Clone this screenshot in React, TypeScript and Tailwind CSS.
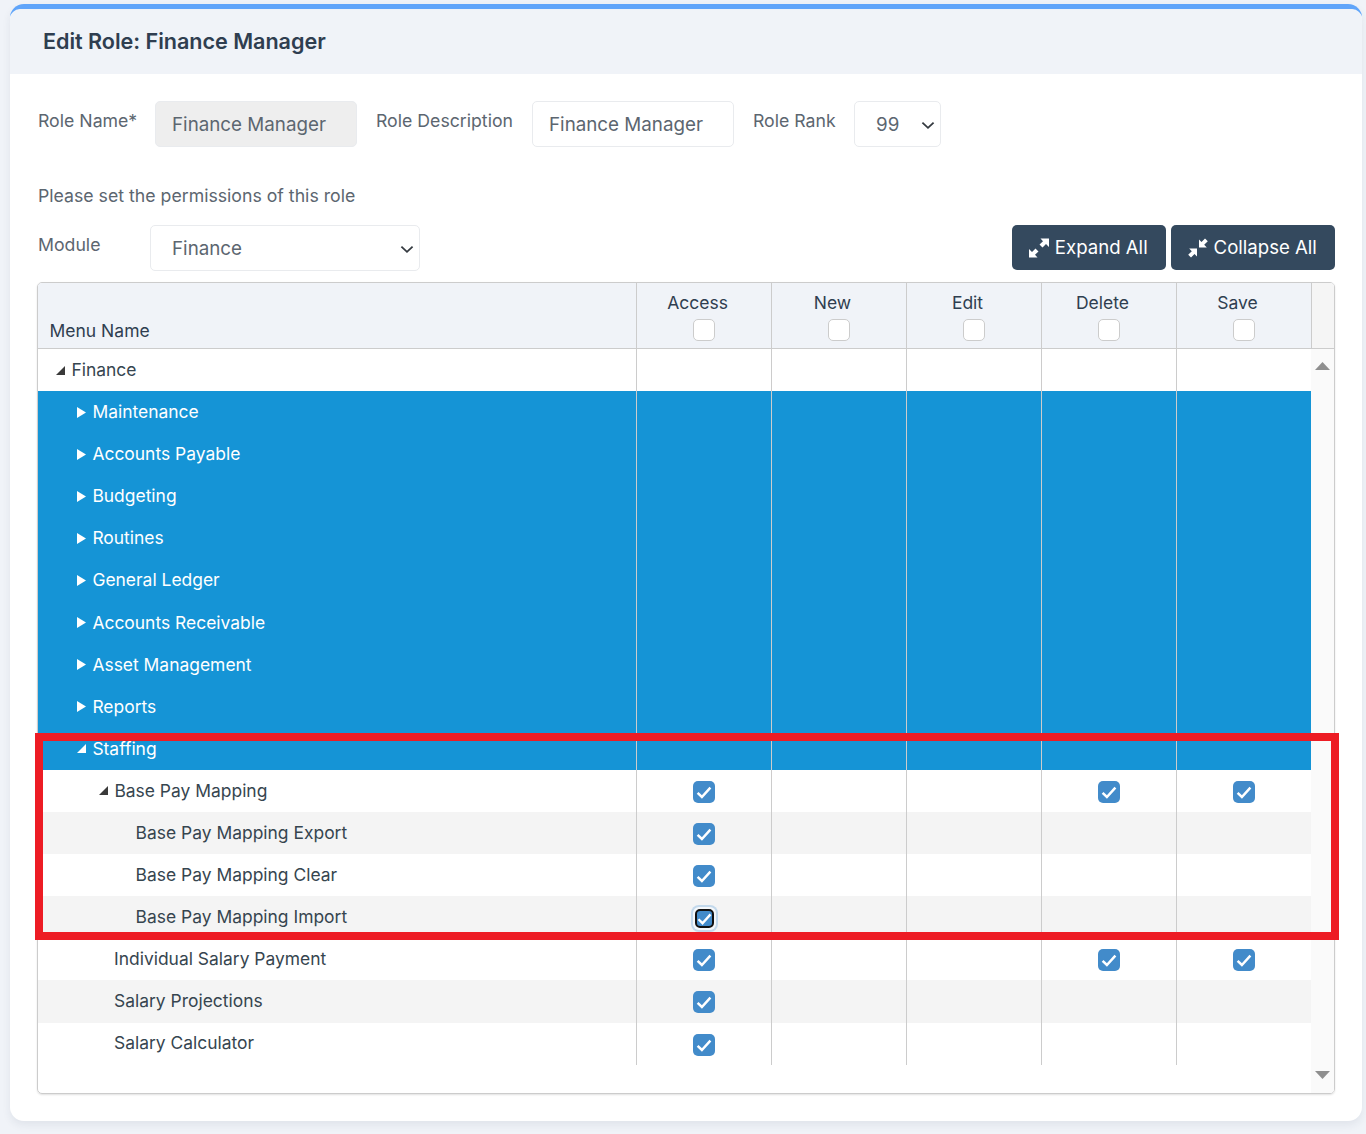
import React from "react";

type Row = { label: string; level: number; tri?: "right" | "down"; blue?: boolean; alt?: boolean; checks?: boolean[]; focus?: boolean };

const rows: Row[] = [
  { label: "Finance", level: 0, tri: "down" },
  { label: "Maintenance", level: 1, tri: "right", blue: true },
  { label: "Accounts Payable", level: 1, tri: "right", blue: true },
  { label: "Budgeting", level: 1, tri: "right", blue: true },
  { label: "Routines", level: 1, tri: "right", blue: true },
  { label: "General Ledger", level: 1, tri: "right", blue: true },
  { label: "Accounts Receivable", level: 1, tri: "right", blue: true },
  { label: "Asset Management", level: 1, tri: "right", blue: true },
  { label: "Reports", level: 1, tri: "right", blue: true },
  { label: "Staffing", level: 1, tri: "down", blue: true },
  { label: "Base Pay Mapping", level: 2, tri: "down", checks: [true, false, false, true, true] },
  { label: "Base Pay Mapping Export", level: 3, alt: true, checks: [true, false, false, false, false] },
  { label: "Base Pay Mapping Clear", level: 3, checks: [true, false, false, false, false] },
  { label: "Base Pay Mapping Import", level: 3, alt: true, checks: [true, false, false, false, false], focus: true },
  { label: "Individual Salary Payment", level: 4, checks: [true, false, false, true, true] },
  { label: "Salary Projections", level: 4, alt: true, checks: [true, false, false, false, false] },
  { label: "Salary Calculator", level: 4, checks: [true, false, false, false, false] },
];

const indent = ["pl-[18px]", "pl-[39px]", "pl-[61px]", "pl-[97.6px]", "pl-[76px]"];

function Tick({ size }: { size: number }) {
  return (
    <svg width={size} height={size} viewBox="0 0 16 16" fill="none">
      <path d="M1.6 8.8 5.9 13 14.4 3.6" stroke="#fff" strokeWidth="2.5" />
    </svg>
  );
}

function Check({ focus }: { focus?: boolean }) {
  if (focus) {
    return (
      <span className="flex h-[23px] w-[23px] items-center justify-center rounded-[6px] bg-[#f4f7fa] shadow-[0_0_0_2px_#c3d9ec]">
        <span className="flex h-[19px] w-[19px] items-center justify-center rounded-[5px] border-[2.5px] border-[#111111] bg-[#428bca]">
          <Tick size={15} />
        </span>
      </span>
    );
  }
  return (
    <span className="flex h-[22px] w-[22px] items-center justify-center rounded-[5px] bg-[#428bca]">
      <Tick size={16} />
    </span>
  );
}

function Tri({ dir, blue }: { dir: "right" | "down"; blue?: boolean }) {
  if (dir === "right") {
    return (
      <svg width="9" height="11" viewBox="0 0 9 11" className="mr-[6.4px] shrink-0">
        <path d="M0 0 9 5.5 0 11Z" fill="#fff" />
      </svg>
    );
  }
  return (
    <svg width="9" height="9" viewBox="0 0 9 9" className="mr-[6.4px] shrink-0">
      <path d="M9 0V9H0Z" fill={blue ? "#fff" : "#3a3a3a"} />
    </svg>
  );
}

function Cell({ children }: { children?: React.ReactNode }) {
  return <div className="flex w-[135px] items-center justify-center border-l border-[#cccccc] pt-[2px]">{children}</div>;
}

function Select({ value, widthCls }: { value: string; widthCls: string }) {
  return (
    <div className={"relative " + widthCls}>
      <select
        defaultValue={value}
        className="h-[46px] w-full appearance-none rounded-[5px] border border-[#e9ebee] bg-white pl-[21px] pt-[2px] text-[18.8px] text-[#5c6670]"
      >
        <option>{value}</option>
      </select>
      <svg
        width="16"
        height="16"
        viewBox="0 0 16 16"
        fill="none"
        className="pointer-events-none absolute right-[5px] top-[16px]"
      >
        <path d="M2.4 5.6l5.6 5.2 5.6-5.2" stroke="#343a40" strokeWidth="1.8" />
      </svg>
    </div>
  );
}

const labelCls = "text-[17.7px] leading-[26px] text-[#5c6670]";
const fieldCls = "h-[46px] rounded-[5px] border border-[#e9ebee] px-[16px] text-[18.8px] text-[#5c6670]";
const btnCls =
  "flex h-[45px] items-center justify-center gap-[5.5px] rounded-[5px] bg-[#34495e] pr-px pt-px text-[18.6px] text-white";

export default function App() {
  return (
    <div className="min-h-[1134px] bg-[#f0f3f8] pl-[10px] pr-[4px] pt-[4px] font-['Inter',sans-serif]">
      <div className="h-[1117px] rounded-[14px] border-t-[5px] border-[#60a5fa] bg-white shadow-[0_4px_8px_rgba(40,50,80,0.08)]">
        <div className="flex h-[65px] items-center rounded-t-[10px] bg-[#f0f3f8] pl-[33px]">
          <h1 className="text-[21.6px] font-semibold tracking-[-0.04px] text-[#2f3e50]">Edit Role: Finance Manager</h1>
        </div>

        <div className="pl-[28px] pt-[27px]">
          <div className="flex items-start">
            <label className={labelCls + " w-[117px] pt-[7px]"}>Role Name*</label>
            <input readOnly value="Finance Manager" className={fieldCls + " w-[202px] bg-[#eeeeee]"} />
            <label className={labelCls + " ml-[19px] w-[156px] pt-[7px]"}>Role Description</label>
            <input readOnly value="Finance Manager" className={fieldCls + " w-[202px] bg-white"} />
            <label className={labelCls + " ml-[19px] w-[101px] pt-[7px]"}>Role Rank</label>
            <Select value="99" widthCls="w-[87px]" />
          </div>

          <p className={labelCls + " mt-[36px]"}>Please set the permissions of this role</p>

          <div className="mt-[16px] flex items-start pr-[27px]">
            <label className={labelCls + " w-[112px] pt-[7px]"}>Module</label>
            <Select value="Finance" widthCls="w-[270px]" />
            <div className="ml-auto flex gap-[5px]">
              <button className={btnCls + " w-[154px]"}>
                <svg width="20" height="20" viewBox="0 0 20 20" fill="#fff">
                  <path d="M11.5 0.5H20V9L17 6 13.5 9.5 10.5 6.5 14 3.2Z" />
                  <path d="M8.5 19.5H0V11L3 14 6.5 10.5 9.5 13.5 6 16.8Z" />
                </svg>
                Expand All
              </button>
              <button className={btnCls + " w-[164px]"}>
                <svg width="20" height="20" viewBox="0 0 20 20" fill="#fff">
                  <path d="M11 9.5V1.5L13.5 4 17 0.5 19.8 3.3 16.2 6.8 18.8 9.5Z" />
                  <path d="M9 10.5V18.5L6.5 16 3 19.5 0.2 16.7 3.8 13.2 1.2 10.5Z" />
                </svg>
                Collapse All
              </button>
            </div>
          </div>

          <div className="-ml-px mr-[27px] mt-[11px] h-[812px] overflow-hidden rounded-[5px] border border-[#cccccc] shadow-[0_1px_2px_rgba(0,0,0,0.12)]">
            <div className="flex h-[66px] border-b border-[#cccccc] bg-[#f0f3f8] text-[17.5px] text-[#2f3e50]">
              <div className="flex w-[598px] items-end pb-[4px] pl-[11.5px]">Menu Name</div>
              {["Access", "New", "Edit", "Delete", "Save"].map((h) => (
                <div key={h} className="flex w-[135px] flex-col items-center border-l border-[#cccccc] pt-[6.5px]">
                  <span className="-ml-[13px] h-[29.5px] leading-[26px]">{h}</span>
                  <span className="h-[22px] w-[22px] rounded-[5px] border border-[#cccccc] bg-white" />
                </div>
              ))}
              <div className="flex-1 border-l border-[#cccccc] bg-[#f5f5f5]" />
            </div>

            <div className="flex">
              <div className="w-[1273px]">
                {rows.map((r) => (
                  <div
                    key={r.label}
                    className={
                      "flex h-[42.1px] text-[17.45px] " +
                      (r.blue ? "bg-[#1594d6] text-white" : r.alt ? "bg-[#f4f4f4] text-[#36454f]" : "bg-white text-[#36454f]")
                    }
                  >
                    <div className={"flex w-[598px] items-center " + indent[r.level]}>
                      {r.tri && <Tri dir={r.tri} blue={r.blue} />}
                      {r.label}
                    </div>
                    {[0, 1, 2, 3, 4].map((i) => (
                      <Cell key={i}>{r.checks?.[i] ? <Check focus={r.focus} /> : null}</Cell>
                    ))}
                  </div>
                ))}
              </div>
              <div className="flex h-[745px] w-[23px] flex-col items-center justify-between bg-[#fafafa] pb-[15px] pt-[13px]">
                <svg width="15" height="8" viewBox="0 0 15 8">
                  <path d="M7.5 0 15 8H0Z" fill="#8f8f8f" />
                </svg>
                <svg width="15" height="8" viewBox="0 0 15 8">
                  <path d="M0 0H15L7.5 8Z" fill="#8f8f8f" />
                </svg>
              </div>
            </div>
          </div>
        </div>
      </div>

      <div className="pointer-events-none absolute left-[35px] top-[733px] h-[207px] w-[1304px] border-[8px] border-[#ed1c24]" />
    </div>
  );
}
